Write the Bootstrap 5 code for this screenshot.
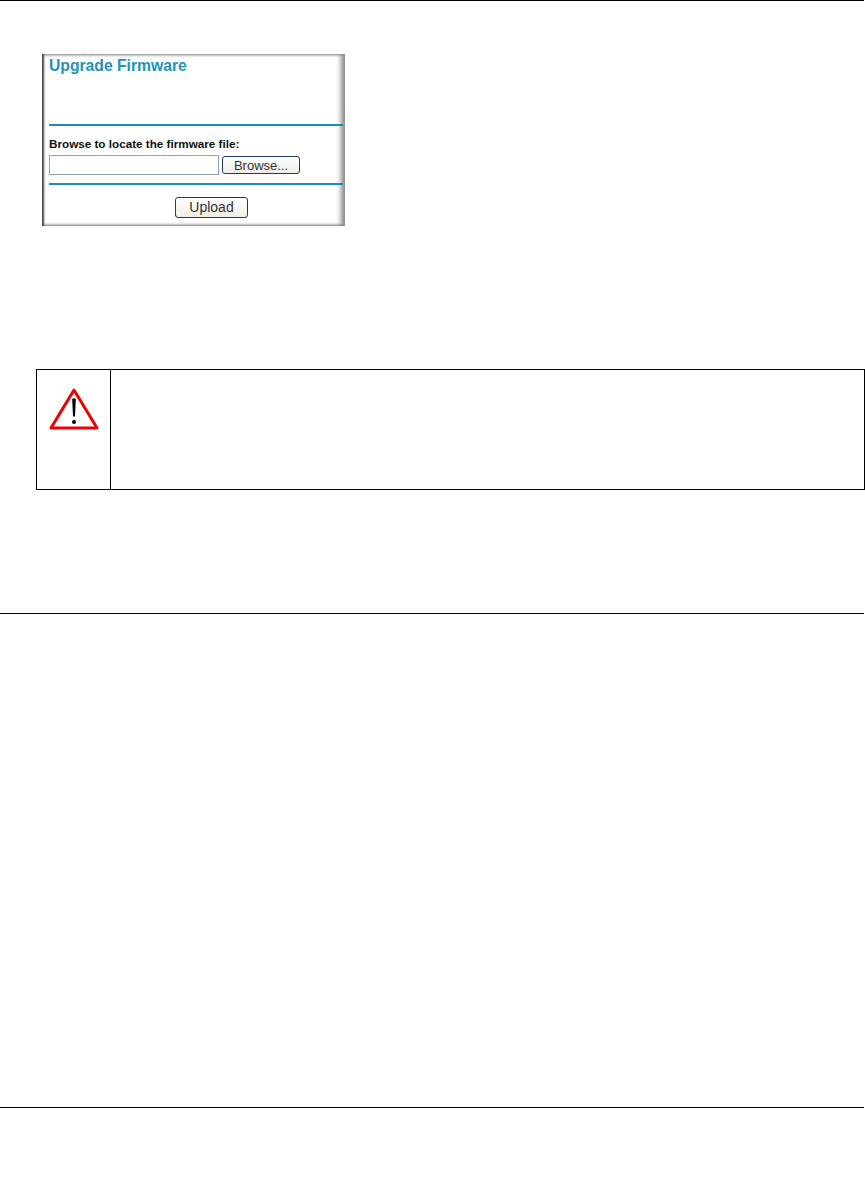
<!DOCTYPE html>
<html lang="en">
<head>
  <meta charset="UTF-8">
  <meta name="viewport" content="width=device-width, initial-scale=1.0">
  <title>Upgrade Firmware</title>
  <link href="https://cdn.jsdelivr.net/npm/bootstrap@5.3.0/dist/css/bootstrap.min.css" rel="stylesheet">
  <style>
    body {
      background: #fff;
      font-family: "Liberation Sans", Arial, sans-serif;
      color: #000;
    }

    .page-rule {
      height: 1px;
      background: #000;
      margin-right: 1px;
    }

    .rule-mid { margin-top: 123px; }
    .rule-end { margin-top: 493px; }

    .fw-panel {
      width: 303px;
      height: 172px;
      margin: 53px 0 0 42px;
      padding: 3px 0 0 7px;
      background: #fff;
      box-shadow: inset 3px 0 2px -1px #444, inset -6px 0 5px -2px #8a8a8a, inset 0 3px 3px -2px #888, inset 0 -3px 3px -2px #777;
    }

    .fw-title {
      font-size: 15.7px;
      font-weight: 700;
      line-height: 18px;
      color: #2491b8;
      height: 67px;
    }

    .fw-rule {
      height: 2px;
      background: #1b8db6;
      margin-right: 2px;
    }

    .fw-label {
      font-size: 11.7px;
      font-weight: 700;
      line-height: 14px;
      margin-top: 11px;
      height: 18px;
      color: #111;
    }

    .fw-file {
      width: 170px;
      height: 20px;
      border: 1px solid #8fa3b5;
      border-radius: 0;
      padding: 0;
      min-height: 0;
    }

    .fw-btn {
      font-size: 13px;
      line-height: 15px;
      padding: 0;
      color: #333;
      background: linear-gradient(#fff, #f0eee6);
      border: 1px solid #1f3a5a;
      border-radius: 3px;
    }

    .fw-browse {
      width: 78px;
      height: 18px;
      margin-left: 3px;
    }

    .fw-upload {
      width: 73px;
      height: 21px;
      font-size: 14px;
    }

    .fw-actions {
      padding-left: 126px;
      margin-top: 12px;
    }

    .warn-box {
      width: 829px;
      height: 121px;
      margin: 143px 0 0 36px;
      border: 1px solid #000;
    }

    .warn-icon {
      width: 74px;
      border-right: 1px solid #000;
      padding: 17px 0 0 11px;
    }
  </style>
</head>
<body>

<div class="page-rule"></div>

<div class="fw-panel">
  <div class="fw-title">Upgrade Firmware</div>
  <div class="fw-rule"></div>
  <div class="fw-label">Browse to locate the firmware file:</div>
  <div class="d-flex align-items-center">
    <input type="text" class="form-control fw-file">
    <button type="button" class="btn fw-btn fw-browse">Browse...</button>
  </div>
  <div class="fw-rule mt-2"></div>
  <div class="d-flex fw-actions">
    <button type="button" class="btn fw-btn fw-upload">Upload</button>
  </div>
</div>

<div class="warn-box d-flex">
  <div class="warn-icon">
    <svg width="52" height="44" viewBox="0 0 52 44">
      <path d="M26 3 L49 41 L3 41 Z" fill="#fff" stroke="#f00000" stroke-width="3" stroke-linejoin="round"/>
      <path d="M24.200 12 Q26 10.500 27.800 12 L27 29 Q26 30 25 29 Z" fill="#000"/>
      <circle cx="26" cy="35" r="2" fill="#000"/>
    </svg>
  </div>
  <div class="flex-grow-1"></div>
</div>

<div class="page-rule rule-mid"></div>
<div class="page-rule rule-end"></div>

<script src="https://cdn.jsdelivr.net/npm/bootstrap@5.3.0/dist/js/bootstrap.bundle.min.js"></script>
</body>
</html>
